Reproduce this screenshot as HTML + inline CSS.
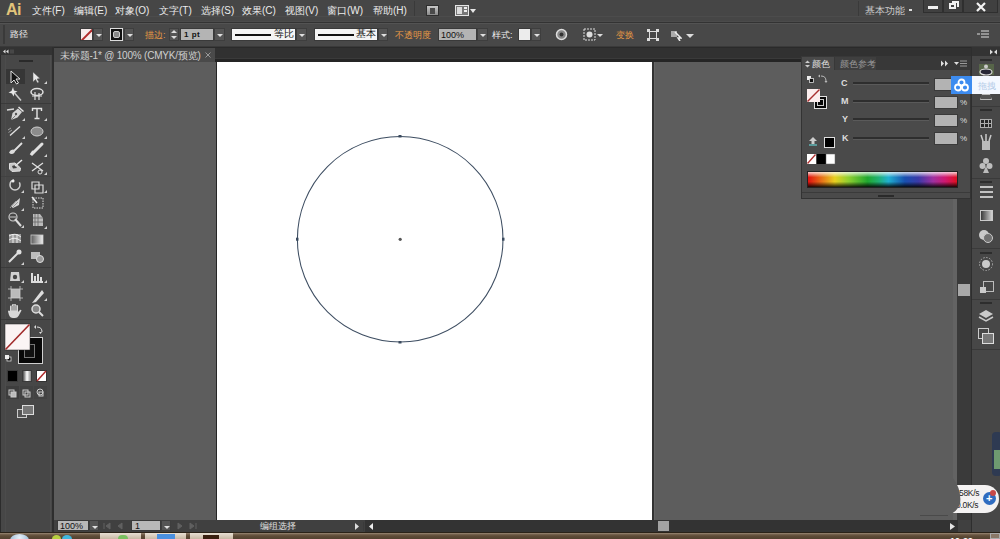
<!DOCTYPE html>
<html><head><meta charset="utf-8">
<style>
*{margin:0;padding:0;box-sizing:border-box}
html,body{width:1000px;height:539px;overflow:hidden;background:#5d5d5d;font-family:"Liberation Sans",sans-serif;font-size:11px;color:#ececec}
.a{position:absolute}
.t{position:absolute;white-space:nowrap;line-height:12px;font-size:10px}
#menubar{left:0;top:0;width:1000px;height:16px;background:#464646}
#sep{left:0;top:16px;width:1000px;height:6px;background:#464646;border-top:1px solid #4c4c4c;border-bottom:1px solid #4b4b4b}
#ctrl{left:0;top:22px;width:1000px;height:25px;background:#484848;border-top:1px solid #333;border-bottom:1px solid #3a3a3a}
#darkband{left:0;top:47px;width:1000px;height:15px;background:#313131;border-top:1px solid #2a2a2a}
#toolbar{left:0;top:47px;width:52px;height:485px;background:#474747}
#canvas{left:54px;top:62px;width:904px;height:458px;background:#5d5d5d}
#artboard{left:217px;top:62px;width:435px;height:458px;background:#fff}
#tab{left:54px;top:48px;width:161px;height:14px;background:#4a4a4a}
#status{left:54px;top:520px;width:918px;height:12px;background:#404040}
#taskbar{left:0;top:532px;width:1000px;height:7px;background:#5a4838}
#colorpanel{left:801px;top:56px;width:170px;height:143px;background:#4a4a4a;border:1px solid #333}
#dock{left:971px;top:47px;width:29px;height:485px;background:#474747}
#vscroll{left:957px;top:62px;width:14px;height:458px;background:#3a3a3a}
.dd{position:absolute;width:10px;height:13px;background:#555;border:1px solid #3e3e3e}
.dd:after{content:"";position:absolute;left:2px;top:5px;border-left:3px solid transparent;border-right:3px solid transparent;border-top:3px solid #e0e0e0}
.or{color:#e89a45}
.fld{position:absolute;background:#b4b4b4;color:#111;border:1px solid #3a3a3a}
</style></head><body>
<div id="menubar" class="a"></div>
<div id="sep" class="a"></div>
<div id="ctrl" class="a"></div>
<div id="darkband" class="a"></div>
<div class="a" style="left:0;top:23px;width:1000px;height:1px;background:#535353"></div>
<div id="canvas" class="a"></div>
<div id="artboard" class="a"></div>
<div id="tab" class="a"></div>
<div id="toolbar" class="a"></div>
<div id="status" class="a"></div>
<div id="taskbar" class="a"></div>
<div id="vscroll" class="a"></div>
<div id="dock" class="a"></div>
<div id="colorpanel" class="a"></div>


<!-- artboard edges -->
<div class="a" style="left:216px;top:62px;width:1px;height:458px;background:#262626"></div>
<div class="a" style="left:652px;top:62px;width:2px;height:458px;background:#323232"></div>
<div class="a" style="left:654px;top:62px;width:1px;height:458px;background:#666"></div>
<div class="a" style="left:215px;top:58px;width:743px;height:1px;background:#3a3a3a"></div>
<div class="a" style="left:215px;top:59px;width:743px;height:3px;background:#252525"></div>

<!-- menubar content -->
<div class="t" style="left:6px;top:2px;font-size:16px;font-weight:bold;color:#e2c47a;line-height:16px;letter-spacing:-0.5px">Ai</div>
<div class="t" style="left:32px;top:5px">文件(F)</div>
<div class="t" style="left:74px;top:5px">编辑(E)</div>
<div class="t" style="left:115px;top:5px">对象(O)</div>
<div class="t" style="left:159px;top:5px">文字(T)</div>
<div class="t" style="left:201px;top:5px">选择(S)</div>
<div class="t" style="left:242px;top:5px">效果(C)</div>
<div class="t" style="left:285px;top:5px">视图(V)</div>
<div class="t" style="left:327px;top:5px">窗口(W)</div>
<div class="t" style="left:373px;top:5px">帮助(H)</div>
<div class="t" style="left:865px;top:5px;color:#ccc">基本功能</div>


<!-- menubar icons -->
<div class="a" style="left:414px;top:1px;width:1px;height:15px;background:#3a3a3a"></div>
<div class="a" style="left:426px;top:5px;width:13px;height:11px;background:linear-gradient(#c8c8c8,#8a8a8a);border:1px solid #2e2e2e"></div>
<div class="a" style="left:430px;top:8px;width:5px;height:6px;background:#4a4a4a"></div>
<div class="a" style="left:455px;top:5px;width:14px;height:11px;border:1px solid #e6e6e6;background:#777"></div>
<div class="a" style="left:457px;top:7px;width:5px;height:7px;background:#ddd"></div>
<div class="a" style="left:464px;top:7px;width:3px;height:2px;background:#eee"></div>
<div class="a" style="left:464px;top:10px;width:3px;height:2px;background:#eee"></div>
<div class="a" style="left:470px;top:9px;border-left:3px solid transparent;border-right:3px solid transparent;border-top:4px solid #e6e6e6"></div>
<div class="a" style="left:858px;top:1px;width:1px;height:15px;background:#3a3a3a"></div>
<div class="a" style="left:909px;top:9px;width:3px;height:2px;background:#ddd"></div>
<!-- window buttons -->
<div class="a" style="left:923px;top:0;width:20px;height:13px;background:#404040;border:1px solid #2f2f2f;border-top:none"></div>
<div class="a" style="left:928px;top:6px;width:10px;height:3px;background:#f0f0f0"></div>
<div class="a" style="left:943px;top:0;width:20px;height:13px;background:#404040;border:1px solid #2f2f2f;border-top:none"></div>
<div class="a" style="left:949px;top:3px;width:7px;height:6px;border:2px solid #f0f0f0"></div>
<div class="a" style="left:952px;top:1px;width:7px;height:6px;border:2px solid #f0f0f0;border-left:none;border-bottom:none"></div>
<div class="a" style="left:963px;top:0;width:35px;height:13px;background:#404040;border:1px solid #2f2f2f;border-top:none"></div>
<svg class="a" style="left:975px;top:2px" width="12" height="10"><path d="M2 1 L10 9 M10 1 L2 9" stroke="#f4f4f4" stroke-width="2.2"/></svg>

<!-- control bar -->
<div class="a" style="left:3px;top:25px;width:2px;height:19px;background:#3a3a3a"></div>
<div class="t" style="left:10px;top:28px;font-size:9px">路径</div>
<div class="a" style="left:80px;top:28px;width:13px;height:13px;background:#f6ecec;border:1px solid #3a3a3a;overflow:hidden"><div style="position:absolute;left:-3px;top:5px;width:18px;height:1.5px;background:#b02a2a;transform:rotate(-45deg)"></div></div>
<div class="dd" style="left:93px;top:28px"></div>
<div class="a" style="left:110px;top:28px;width:13px;height:13px;background:#111;border:1px solid #ddd"></div>
<div class="a" style="left:113px;top:31px;width:7px;height:7px;border:1px solid #ccc;border-radius:2px;background:#888"></div>
<div class="dd" style="left:124px;top:28px"></div>
<div class="t or" style="left:145px;top:29px;font-size:9px">描边:</div>
<div class="a" style="left:169px;top:28px;width:10px;height:13px;background:#555;border:1px solid #3e3e3e"></div>
<div class="a" style="left:171px;top:30px;border-left:3px solid transparent;border-right:3px solid transparent;border-bottom:3px solid #ddd"></div>
<div class="a" style="left:171px;top:36px;border-left:3px solid transparent;border-right:3px solid transparent;border-top:3px solid #ddd"></div>
<div class="fld t" style="left:180px;top:28px;width:34px;height:13px;padding-left:3px;font-weight:bold;font-size:8px;letter-spacing:0.5px">1 pt</div>
<div class="dd" style="left:214px;top:28px;width:11px"></div>
<div class="a" style="left:231px;top:28px;width:65px;height:13px;background:#f4f4f4;border:1px solid #3a3a3a"></div>
<div class="a" style="left:235px;top:34px;width:36px;height:2px;background:#111"></div>
<div class="t" style="left:274px;top:28px;color:#111;font-size:10px">等比</div>
<div class="dd" style="left:296px;top:28px;width:11px"></div>
<div class="a" style="left:314px;top:28px;width:64px;height:13px;background:#f4f4f4;border:1px solid #3a3a3a"></div>
<div class="a" style="left:318px;top:34px;width:36px;height:2px;background:#111"></div>
<div class="t" style="left:356px;top:28px;color:#111;font-size:10px">基本</div>
<div class="dd" style="left:378px;top:28px;width:10px"></div>
<div class="t or" style="left:395px;top:29px;font-size:9px">不透明度</div>
<div class="fld t" style="left:438px;top:28px;width:39px;height:13px;padding-left:2px;font-size:9px">100%</div>
<div class="dd" style="left:477px;top:28px;width:11px"></div>
<div class="t" style="left:492px;top:29px;font-size:9px">样式:</div>
<div class="a" style="left:518px;top:28px;width:13px;height:13px;background:#ececec;border:1px solid #3a3a3a"></div>
<div class="dd" style="left:531px;top:28px"></div>
<svg class="a" style="left:555px;top:28px" width="13" height="13"><circle cx="6.5" cy="6.5" r="5" fill="#888" stroke="#ddd" stroke-width="1.5"/><circle cx="6.5" cy="6.5" r="2" fill="#333"/></svg>
<svg class="a" style="left:583px;top:28px" width="13" height="13"><rect x="1" y="1" width="11" height="11" fill="none" stroke="#ddd" stroke-dasharray="2 1"/><circle cx="6.5" cy="6.5" r="3" fill="#ddd"/></svg>
<div class="a" style="left:597px;top:34px;border-left:3px solid transparent;border-right:3px solid transparent;border-top:3px solid #ddd"></div>
<div class="t or" style="left:616px;top:29px;font-size:9px">变换</div>
<svg class="a" style="left:647px;top:29px" width="12" height="12"><rect x="2.5" y="2.5" width="7" height="7" fill="none" stroke="#ddd"/><path d="M0 0h3v3h-3zM9 0h3v3h-3zM0 9h3v3h-3zM9 9h3v3h-3z" fill="#ddd"/></svg>
<svg class="a" style="left:670px;top:28px" width="12" height="13"><path d="M1 3h6v6h-6z" fill="#aaa"/><path d="M5 4 L11 10 L8 10 L10 13" stroke="#eee" stroke-width="1.5" fill="none"/></svg>
<div class="a" style="left:686px;top:34px;border-left:4px solid transparent;border-right:4px solid transparent;border-top:4px solid #ddd"></div>
<svg class="a" style="left:977px;top:29px" width="12" height="11"><path d="M4 2h8M4 5h8M4 8h8M0 5h3" stroke="#ddd" stroke-width="1"/></svg>


<!-- tab -->
<div class="t" id="tabtxt" style="left:60px;top:50px;color:#cfcfcf;font-size:10px;letter-spacing:-0.2px">未标题-1* @ 100% (CMYK/预览)</div>
<svg class="a" style="left:205px;top:52px" width="6" height="6"><path d="M0.5 0.5L5.5 5.5M5.5 0.5L0.5 5.5" stroke="#999" stroke-width="1"/></svg>


<!-- toolbar -->
<div class="a" style="left:0;top:47px;width:52px;height:8px;background:#333"></div>
<div class="a" style="left:52px;top:47px;width:2px;height:485px;background:#2e2e2e"></div>
<div class="a" style="left:0;top:55px;width:1px;height:477px;background:#2c2c2c"></div>
<div class="a" style="left:5px;top:55px;width:1px;height:477px;background:#4c4c4c"></div>
<div class="a" style="left:50px;top:55px;width:1px;height:477px;background:#4e4e4e"></div>
<svg class="a" style="left:0;top:47px" width="52" height="485">
<g fill="#ddd"><path d="M3 4.5L5.5 2.5v4zM6 4.5L8.5 2.5v4z"/></g>
<rect x="10.5" y="2.5" width="1" height="4" fill="#5c5c5c"/><rect x="12.5" y="2.5" width="1" height="4" fill="#5c5c5c"/>
<rect x="19" y="13" width="14" height="2" fill="#2a2a2a"/>
<g transform="translate(0,-47)">
<!-- active tool bg -->
<rect x="6" y="69" width="19" height="15" fill="#363636"/>
<!-- selection black arrow -->
<path d="M11 71 L11 83 L14 80 L16.5 84 L18.5 83 L16 79 L20 79 Z" fill="#111" stroke="#e0e0e0" stroke-width="1"/>
<!-- direct selection -->
<path d="M33 72 L33 82 L35.5 79.5 L37.5 83 L39 82 L37 79 L40 78.5 Z" fill="#e8e8e8" stroke="#555" stroke-width="0.5"/>
<path d="M47 81 L47 84 L44 84 Z" fill="#d0d0d0"/>
<!-- magic wand -->
<path d="M13 87 L14 90.5 L17.5 91.5 L14.5 93 L13.5 96.5 L12 93.5 L8.5 92.5 L11.5 91 Z" fill="#e8e8e8"/>
<path d="M14.5 93 L21 100.5" stroke="#ccc" stroke-width="1.5"/>
<!-- lasso -->
<ellipse cx="37" cy="92" rx="6" ry="3.5" fill="none" stroke="#e0e0e0" stroke-width="1.5"/>
<path d="M35 92 L35 100 M39 93 L39 100 M32 96 L42 96" stroke="#e0e0e0" stroke-width="1.2"/>
<rect x="1" y="103" width="50" height="1" fill="#3a3a3a"/>
<!-- pen -->
<path d="M7 110 L14 109" stroke="#d8d8d8" stroke-width="1.5"/><path d="M11 120 L12.5 113 L18 108.5 L22 112 L17.5 117.5 Z" fill="#d4d4d4"/><path d="M18.5 107 L23.5 111.5" stroke="#e8e8e8" stroke-width="1.5"/><circle cx="16" cy="114" r="1.2" fill="#555"/><path d="M11 120 L15.5 115.5" stroke="#666" stroke-width="0.8"/>
<path d="M25 118 L25 121 L22 121 Z" fill="#d0d0d0"/>
<!-- Type -->
<path d="M32.5 111 V108.5 H41.5 V111 M37 108.5 V118.5 M34.5 118.5 H39.5" stroke="#e4e4e4" stroke-width="1.4" fill="none"/>
<path d="M47 118 L47 121 L44 121 Z" fill="#d0d0d0"/>
<!-- line -->
<path d="M10 135.5 L20 126.5" stroke="#e0e0e0" stroke-width="1.4"/><path d="M8 130 L11 128 M8.5 132.5 L12 130" stroke="#aaa" stroke-width="0.9"/>
<path d="M25 136 L25 139 L22 139 Z" fill="#d0d0d0"/>
<!-- ellipse -->
<ellipse cx="37" cy="131.5" rx="6" ry="4.5" fill="#8c8c8c" stroke="#cfcfcf" stroke-width="1"/>
<path d="M47 136 L47 139 L44 139 Z" fill="#d0d0d0"/>
<!-- brush -->
<path d="M22 143 L14.5 150.5" stroke="#e0e0e0" stroke-width="1.8"/><path d="M9 152.5 Q11 148.5 15 150 Q15.5 153 12 154 Q10 154 9 152.5Z" fill="#dcdcdc"/>
<!-- pencil -->
<path d="M42 144 L33 153 L31 155 L33 152" stroke="#e0e0e0" stroke-width="3" stroke-linecap="round"/>
<path d="M47 154 L47 157 L44 157 Z" fill="#d0d0d0"/>
<!-- blob brush -->
<path d="M9.5 163.5 L15 163 L20.5 168 L20 171 L12 171.5 L9.5 169 Z" fill="#c8c8c8" stroke="#e0e0e0"/><path d="M12 166 L15 165 L17 168 L13 168.5 Z" fill="#444"/><path d="M15 166 L22 160" stroke="#e8e8e8" stroke-width="1.6"/>
<!-- scissors -->
<path d="M32 163 L43 171 M32 171 L43 163" stroke="#e0e0e0" stroke-width="1.3"/><circle cx="40" cy="172" r="2" fill="none" stroke="#ddd"/>
<path d="M47 172 L47 175 L44 175 Z" fill="#d0d0d0"/>
<rect x="1" y="176" width="50" height="1" fill="#414141"/>
<!-- rotate -->
<circle cx="15" cy="185" r="5" fill="none" stroke="#cfcfcf" stroke-width="1.5" stroke-dasharray="22 6"/><circle cx="13" cy="181" r="1.5" fill="#eee"/>
<path d="M24 190 L24 193 L21 193 Z" fill="#d0d0d0"/>
<!-- scale -->
<path d="M32 182 h7 v7 h-7z M35 185 h8 v8 h-8z" fill="none" stroke="#dcdcdc" stroke-width="1.2"/>
<path d="M47 190 L47 193 L44 193 Z" fill="#d0d0d0"/>
<!-- warp -->
<path d="M11 206 L20 198 L19 205 L13 208 Z" fill="#d8d8d8"/><path d="M10 208 L16 201 M12 208 L18 202" stroke="#999"/>
<path d="M24 208 L24 211 L21 211 Z" fill="#d0d0d0"/>
<!-- free transform -->
<rect x="33" y="198" width="10" height="10" fill="none" stroke="#ddd" stroke-dasharray="1.5 1"/><path d="M32 197 L37 203" stroke="#eee" stroke-width="1.5"/>
<!-- shape builder -->
<circle cx="13" cy="217" r="4" fill="none" stroke="#ccc" stroke-width="1.2"/><path d="M10 217 h6" stroke="#ccc"/><path d="M15 219 L21 226" stroke="#ddd" stroke-width="2"/>
<path d="M24 225 L24 228 L21 228 Z" fill="#d0d0d0"/>
<!-- perspective grid -->
<path d="M33 214 h7 l3 4 v8 h-10z" fill="#bcbcbc"/><path d="M35 214 v12 M38 214 v12 M33 218 h10 M33 222 h10" stroke="#666" stroke-width="0.8"/>
<path d="M47 226 L47 229 L44 229 Z" fill="#d0d0d0"/>
<!-- mesh -->
<rect x="9" y="234" width="12" height="9" fill="#999"/><path d="M9 236 Q15 232 21 237 M9 240 Q15 236 21 241 M13 234 v9 M17 234 v9" stroke="#eee" stroke-width="1" fill="none"/>
<!-- gradient -->
<defs><linearGradient id="tg" x1="0" x2="1" y1="0" y2="0"><stop offset="0" stop-color="#5a5a5a"/><stop offset="1" stop-color="#eeeeee"/></linearGradient></defs>
<rect x="31" y="235" width="12" height="9" fill="url(#tg)" stroke="#ccc" stroke-width="0.8"/>
<!-- eyedropper -->
<path d="M9 262 L18 253" stroke="#ddd" stroke-width="2"/><circle cx="19" cy="252" r="2.5" fill="#e0e0e0"/>
<path d="M24 262 L24 265 L21 265 Z" fill="#d0d0d0"/>
<!-- blend -->
<rect x="31" y="252" width="9" height="7" fill="#bbb"/><circle cx="40" cy="259" r="3.5" fill="#999" stroke="#ddd"/>
<rect x="1" y="267" width="50" height="1" fill="#3a3a3a"/>
<!-- symbol sprayer -->
<path d="M11 272 h8 l1 9 h-10z" fill="#d0d0d0"/><circle cx="15" cy="277" r="2.2" fill="#444"/>
<path d="M24 280 L24 283 L21 283 Z" fill="#d0d0d0"/>
<!-- graph -->
<path d="M31 282 h12 M32 281 v-8 M35 281 v-5 M38 281 v-7 M41 281 v-4" stroke="#ddd" stroke-width="2"/>
<path d="M47 280 L47 283 L44 283 Z" fill="#d0d0d0"/>
<!-- artboard -->
<rect x="11" y="289" width="9" height="9" fill="#bbb"/><path d="M8 289 h15 M8 298 h15 M11 286 v15 M20 286 v15" stroke="#ccc" stroke-width="0.8"/>
<!-- slice -->
<path d="M32 303 L42 290 L44 293 L36 302 Z" fill="#ddd"/>
<path d="M47 298 L47 301 L44 301 Z" fill="#d0d0d0"/>
<!-- hand -->
<path d="M10 311 V306.5 Q10 305.5 11 305.5 Q12 305.5 12 306.5 V310 V305 Q12 304 13 304 Q14 304 14 305 V310 V305 Q14 304 15 304 Q16 304 16 305 V310 V306 Q16 305 17 305 Q18 305 18 306 V312 L20 310 Q21 309.5 21.5 310.5 L18.5 316 Q17.5 318 15 318 H13 Q10 318 9 315 L8 311.5 Q8 310.5 9 310.5 Z" fill="#d8d8d8"/>
<path d="M12 306 V310.5 M14 305 V310.5 M16 305.5 V310.5" stroke="#474747" stroke-width="0.7"/>
<!-- zoom -->
<circle cx="36" cy="309" r="4" fill="#888" stroke="#ddd" stroke-width="1.5"/><path d="M39 312 L43 316" stroke="#ddd" stroke-width="2"/>
<rect x="1" y="319" width="50" height="1" fill="#3a3a3a"/>
<!-- stroke swatch -->
<rect x="18.5" y="337.5" width="24" height="26" fill="#080808" stroke="#cfcfcf"/>
<rect x="24.5" y="344.5" width="10" height="13" fill="#111" stroke="#777"/>
<!-- fill swatch -->
<rect x="5" y="324" width="25" height="26" fill="#fbf4f4" stroke="#222" stroke-width="0.5"/>
<path d="M5.5 349.5 L29.5 324.5" stroke="#a12a2a" stroke-width="1.6"/>
<!-- swap -->
<path d="M37 327 q5 0 5 5" fill="none" stroke="#ddd"/><path d="M36 325 v4 l-2 -2z M42 332 h-3 l1.5 2z" fill="#ddd"/>
<!-- default -->
<rect x="7" y="357" width="4" height="4" fill="#111" stroke="#ddd" stroke-width="0.8"/><rect x="5" y="355" width="4" height="4" fill="#eee"/>
<!-- color modes -->
<rect x="7.5" y="370.5" width="10" height="11" fill="#000" stroke="#3a3a3a"/>
<rect x="22.5" y="370.5" width="9" height="11" fill="url(#tg2)" stroke="#3a3a3a"/>
<defs><linearGradient id="tg2"><stop offset="0" stop-color="#333"/><stop offset="0.5" stop-color="#fff"/><stop offset="1" stop-color="#777"/></linearGradient></defs>
<rect x="36.5" y="370.5" width="10" height="11" fill="#fff" stroke="#333"/><path d="M37 381 L46 371" stroke="#b02a2a" stroke-width="1.5"/>
<!-- draw modes -->
<rect x="6" y="386" width="13" height="13" fill="#3d3d3d"/><rect x="20" y="386" width="13" height="13" fill="#424242"/><rect x="34" y="386" width="13" height="13" fill="#424242"/>
<g fill="none" stroke="#ccc" stroke-width="1"><rect x="9" y="390" width="5" height="5"/><rect x="11" y="392" width="5" height="5" fill="#bbb"/>
<rect x="23" y="390" width="5" height="5"/><rect x="25" y="392" width="5" height="5"/>
<circle cx="40" cy="392" r="3"/><rect x="39" y="392" width="4" height="4"/></g>
<!-- screen mode -->
<rect x="17.5" y="409.5" width="9" height="8" fill="#555" stroke="#ccc"/>
<rect x="22.5" y="405.5" width="11" height="9" fill="#777" stroke="#ddd"/>
</g>
</svg>


<!-- color panel -->
<div class="a" style="left:801px;top:56px;width:170px;height:14px;background:#383838"></div>
<div class="a" style="left:802px;top:57px;width:32px;height:13px;background:#4a4a4a"></div>
<div class="a" style="left:835px;top:57px;width:41px;height:13px;background:#3f3f3f"></div>
<svg class="a" style="left:805px;top:60px" width="5" height="8"><path d="M0 3L2.5 0.5L5 3ZM0 5L2.5 7.5L5 5Z" fill="#ccc"/></svg>
<div class="t" style="left:812px;top:58px;color:#e0e0e0;font-size:9px">颜色</div>
<div class="t" style="left:840px;top:58px;color:#9a9a9a;font-size:9px">颜色参考</div>
<svg class="a" style="left:940px;top:60px" width="30" height="8"><path d="M1 0.5L4 3.5L1 6.5ZM5 0.5L8 3.5L5 6.5Z" fill="#e0e0e0"/><path d="M14 2h5l-2.5 3z" fill="#ddd"/><path d="M20 1h7M20 3.5h7M20 6h7" stroke="#999" stroke-width="1"/></svg>
<!-- default & swap icons -->
<svg class="a" style="left:805px;top:74px" width="24" height="36">
<rect x="2" y="2" width="4" height="4" fill="#eee"/><rect x="4.5" y="4.5" width="4" height="4" fill="#111" stroke="#ddd" stroke-width="0.8"/>
<path d="M16 2 q5 0 5 5" fill="none" stroke="#bbb"/><path d="M15 0.5v3l-2-1.5z M19.5 7h3l-1.5 2z" fill="#bbb"/>
<rect x="9.5" y="22.5" width="12" height="12" fill="#070707" stroke="#e0e0e0"/>
<rect x="12.5" y="25.5" width="6" height="6" fill="none" stroke="#ccc"/>
<rect x="2" y="15" width="13" height="13" fill="#fbeeee"/>
<path d="M2.5 27.5 L14.5 15.5" stroke="#a83030" stroke-width="1.5"/>
</svg>
<div class="t" style="left:841px;top:77px;color:#ddd;font-size:9px;font-weight:bold">C</div>
<div class="t" style="left:841px;top:95px;color:#ddd;font-size:9px;font-weight:bold">M</div>
<div class="t" style="left:842px;top:113px;color:#ddd;font-size:9px;font-weight:bold">Y</div>
<div class="t" style="left:842px;top:132px;color:#ddd;font-size:9px;font-weight:bold">K</div>
<div class="a" style="left:853px;top:82px;width:76px;height:3px;background:#2e2e2e;border-bottom:1px solid #5a5a5a"></div>
<div class="a" style="left:853px;top:100px;width:76px;height:3px;background:#2e2e2e;border-bottom:1px solid #5a5a5a"></div>
<div class="a" style="left:853px;top:118px;width:76px;height:3px;background:#2e2e2e;border-bottom:1px solid #5a5a5a"></div>
<div class="a" style="left:853px;top:137px;width:76px;height:3px;background:#2e2e2e;border-bottom:1px solid #5a5a5a"></div>
<div class="a" style="left:934px;top:78px;width:24px;height:13px;background:#b3b3b3;border:1px solid #3a3a3a"></div>
<div class="a" style="left:934px;top:96px;width:24px;height:13px;background:#b3b3b3;border:1px solid #3a3a3a"></div>
<div class="a" style="left:934px;top:114px;width:24px;height:13px;background:#b3b3b3;border:1px solid #3a3a3a"></div>
<div class="a" style="left:934px;top:132px;width:24px;height:13px;background:#b3b3b3;border:1px solid #3a3a3a"></div>
<div class="t" style="left:960px;top:97px;color:#ddd;font-size:8px">%</div>
<div class="t" style="left:960px;top:115px;color:#ddd;font-size:8px">%</div>
<div class="t" style="left:960px;top:133px;color:#ddd;font-size:8px">%</div>
<svg class="a" style="left:806px;top:136px" width="32" height="30">
<path d="M7 1 L11 5 H8.5 V10 H5.5 V5 H3 Z" fill="#ccc"/><rect x="3" y="8" width="8" height="2" fill="#5a9a9a"/>
<rect x="18.5" y="1.5" width="10" height="10" fill="#000" stroke="#ddd"/>
<rect x="1" y="18" width="9" height="10" fill="#fff"/><path d="M1.5 27.5 L9.5 18.5" stroke="#b03030" stroke-width="1.3"/>
<rect x="11" y="18" width="9" height="10" fill="#000"/>
<rect x="20" y="18" width="9" height="10" fill="#fff" stroke="#666" stroke-width="0.5"/>
</svg>
<div class="a" style="left:807px;top:171px;width:151px;height:17px;border:1px solid #222;background:linear-gradient(to right,#e01010 0%,#e87018 9%,#e8d020 18%,#90d030 27%,#20a830 40%,#20b070 47%,#20b0d0 54%,#1850b0 65%,#3a3aa8 74%,#a030a0 84%,#d01870 92%,#e01020 100%)"></div>
<div class="a" style="left:808px;top:172px;width:149px;height:15px;background:linear-gradient(to bottom,rgba(255,255,255,0.8) 0%,rgba(255,255,255,0) 35%,rgba(0,0,0,0) 65%,rgba(0,0,0,0.85) 100%)"></div>
<div class="a" style="left:802px;top:192px;width:168px;height:1px;background:#3a3a3a"></div>
<div class="a" style="left:878px;top:195px;width:16px;height:2px;background:#2a2a2a"></div>


<!-- vertical scrollbar & dock -->
<div class="a" style="left:953px;top:199px;width:4px;height:321px;background:#636363"></div>
<div class="a" style="left:958px;top:284px;width:12px;height:12px;background:#a8a8a8"></div>
<div class="a" style="left:971px;top:47px;width:1px;height:485px;background:#2e2e2e"></div>
<div class="a" style="left:972px;top:47px;width:28px;height:9px;background:#333"></div>
<svg class="a" style="left:990px;top:49px" width="8" height="6"><path d="M0 0.5L3 3L0 5.5ZM7 0.5L4 3L7 5.5Z" fill="#ddd"/></svg>
<svg class="a" style="left:972px;top:56px;opacity:0.88" width="28" height="300">
<g fill="#2a2a2a"><rect x="8" y="3" width="12" height="2"/><rect x="8" y="53" width="12" height="2"/><rect x="8" y="125" width="12" height="2"/><rect x="8" y="196" width="12" height="2"/><rect x="8" y="246" width="12" height="2"/></g>
<g fill="#393939"><rect x="0" y="50" width="28" height="1"/><rect x="0" y="122" width="28" height="1"/><rect x="0" y="192" width="28" height="1"/><rect x="0" y="243" width="28" height="1"/></g>
<g transform="translate(0,-56)">
<!-- icon1 cc -->
<rect x="979" y="64" width="15" height="11" fill="#5a6a4a" transform="translate(-972,0)"/>
<ellipse cx="14" cy="72" rx="6" ry="3" fill="#223" stroke="#eee" stroke-width="1.2"/>
<circle cx="14" cy="66.5" r="2" fill="#ddd"/>
<!-- icon2 -->
<path d="M8 100 h12 l-2 -6 h-8z" fill="#ccc"/><rect x="9" y="95" width="10" height="4" fill="#555"/>
<!-- swatches -->
<rect x="8" y="119" width="12" height="9" fill="#bbb"/><g fill="#222"><rect x="9" y="120" width="3" height="3"/><rect x="13" y="120" width="3" height="3"/><rect x="17" y="120" width="2" height="3"/><rect x="9" y="124" width="3" height="3"/><rect x="13" y="124" width="3" height="3"/><rect x="17" y="124" width="2" height="3"/></g>
<!-- brushes -->
<rect x="10" y="141" width="8" height="9" fill="#ccc"/><path d="M11 141 l-2 -6 M14 141 v-7 M17 141 l2 -6" stroke="#ddd" stroke-width="1.5"/>
<!-- symbols (club) -->
<circle cx="14" cy="161" r="3" fill="#d0d0d0"/><circle cx="10.5" cy="166" r="3" fill="#d0d0d0"/><circle cx="17.5" cy="166" r="3" fill="#d0d0d0"/><path d="M14 166 l-3 7 h6z" fill="#ccc"/>
<!-- stroke lines -->
<g fill="#d4d4d4"><rect x="8" y="186" width="13" height="2"/><rect x="8" y="191" width="13" height="2"/><rect x="8" y="196" width="13" height="2"/></g>
<!-- gradient -->
<defs><linearGradient id="dg"><stop offset="0" stop-color="#333"/><stop offset="1" stop-color="#eee"/></linearGradient></defs>
<rect x="8.5" y="210.5" width="12" height="10" fill="url(#dg)" stroke="#ddd"/>
<!-- transparency -->
<circle cx="12" cy="235" r="5" fill="#ddd"/><circle cx="16" cy="238" r="4.5" fill="#777" stroke="#ddd"/>
<!-- appearance -->
<circle cx="14" cy="264" r="6.5" fill="none" stroke="#bbb" stroke-dasharray="1.5 1.5"/><circle cx="14" cy="264" r="4" fill="#ddd"/>
<!-- graphic styles -->
<rect x="11.5" y="281.5" width="10" height="10" fill="none" stroke="#ccc"/><rect x="8" y="287" width="6" height="6" fill="#ddd"/>
<!-- layers -->
<path d="M14 310 L21 314 L14 318 L7 314Z" fill="#ddd"/><path d="M7 317 L14 321 L21 317" fill="none" stroke="#ddd" stroke-width="1.5"/>
</g>
</svg>
<svg class="a" style="left:972px;top:326px" width="28" height="20"><rect x="6.5" y="2.5" width="10" height="10" fill="none" stroke="#ccc"/><rect x="10.5" y="7.5" width="11" height="10" fill="#777" stroke="#ddd"/></svg>
<div class="a" style="left:992px;top:432px;width:10px;height:44px;background:#2e3a52;border-radius:4px"></div>
<div class="a" style="left:994px;top:450px;width:6px;height:19px;background:#6e9a70"></div>
<div class="a" style="left:972px;top:349px;width:28px;height:1px;background:#393939"></div>

<!-- status bar -->
<div class="a" style="left:365px;top:520px;width:593px;height:12px;background:#333"></div>
<div class="fld t" style="left:57px;top:520px;width:32px;height:11px;font-size:9px;line-height:10px;padding-left:2px;background:#b8b8b8">100%</div>
<div class="dd" style="left:89px;top:520px;width:10px;height:11px"></div>
<svg class="a" style="left:100px;top:521px" width="30" height="10"><path d="M4 2v6M10 2L6 5L10 8ZM22 2L18 5L22 8Z" stroke="#606060" fill="#606060"/></svg>
<div class="fld t" style="left:131px;top:520px;width:30px;height:11px;font-size:9px;line-height:10px;padding-left:3px;background:#b8b8b8">1</div>
<div class="dd" style="left:161px;top:520px;width:10px;height:11px"></div>
<svg class="a" style="left:172px;top:521px" width="34" height="10"><path d="M6 2L10 5L6 8ZM18 2L22 5L18 8ZM24 2v6" stroke="#606060" fill="#606060"/></svg>
<div class="t" style="left:260px;top:520px;color:#e0e0e0;font-size:9px">编组选择</div>
<svg class="a" style="left:353px;top:522px" width="22" height="9"><path d="M2 1L6 4.5L2 8Z" fill="#ddd"/><path d="M20 1L16 4.5L20 8Z" fill="#eee"/><rect x="10" y="0" width="1" height="9" fill="#3a3a3a"/></svg>
<div class="a" style="left:658px;top:521px;width:11px;height:10px;background:#a3a3a3"></div>
<svg class="a" style="left:948px;top:522px" width="9" height="9"><path d="M2 1L7 4.5L2 8Z" fill="#e6e6e6"/></svg>

<!-- net widget -->
<div class="a" style="left:948px;top:485px;width:51px;height:28px;background:#f4f2f2;border-radius:0 14px 14px 0"></div>
<div class="t" style="left:959px;top:488px;color:#222;font-size:8.5px;line-height:10px;letter-spacing:-0.3px">58K/s</div>
<div class="t" style="left:956px;top:500px;color:#222;font-size:8.5px;line-height:10px;letter-spacing:-0.3px">0.0K/s</div>
<div class="a" style="left:983px;top:492px;width:13px;height:13px;border-radius:50%;background:#2f6cc0"></div>
<div class="t" style="left:986px;top:491px;color:#fff;font-size:11px;font-weight:bold;line-height:14px">+</div>
<div class="a" style="left:990px;top:490px;width:6px;height:6px;border-radius:50%;background:#c84848"></div>
<svg class="a" style="left:900px;top:470px" width="62" height="50"><path d="M0 14 H53 V8 Q62 20 60 34 Q56 44 46 45 H0 Z" fill="#5d5d5d"/><path d="M20 45.5 H48" stroke="#4a4a4a" stroke-width="1"/></svg>

<!-- taskbar -->
<div class="a" style="left:0;top:532px;width:1000px;height:7px;background:linear-gradient(#2a2218 0px,#2a2218 1px,#a08f7c 1px,#7a6752 2px,#5e4b37 4px,#534230 7px)"></div>
<div class="a" style="left:10px;top:534px;width:19px;height:12px;border-radius:50%;background:radial-gradient(circle at 50% 30%,#e8f0f8,#8ab0d0)"></div>
<div class="a" style="left:52px;top:535px;width:9px;height:8px;border-radius:50%;background:#b8d040"></div>
<div class="a" style="left:62px;top:535px;width:10px;height:8px;border-radius:50%;background:#40b8e0"></div>
<div class="a" style="left:100px;top:533px;width:41px;height:6px;background:linear-gradient(#e8e0d4,#c8b8a4)"></div>
<div class="a" style="left:145px;top:533px;width:41px;height:6px;background:linear-gradient(#e8e0d4,#c8b8a4)"></div>
<div class="a" style="left:190px;top:533px;width:43px;height:6px;background:linear-gradient(#e8e0d4,#c8b8a4)"></div>
<div class="a" style="left:118px;top:535px;width:10px;height:4px;background:#7ac060;border-radius:4px 4px 0 0"></div>
<div class="a" style="left:157px;top:534px;width:18px;height:5px;background:#4a90e0"></div>
<div class="a" style="left:203px;top:535px;width:16px;height:4px;background:#3a2010"></div>
<div class="t" style="left:950px;top:535px;color:#fff;font-size:9px;font-weight:bold">10:29</div>
<div class="a" style="left:990px;top:533px;width:10px;height:6px;background:#8a7868;border:1px solid #aaa"></div>

<!-- baidu overlay -->
<div class="a" style="left:951px;top:76px;width:49px;height:18px;background:#f4f8ff"></div>
<div class="a" style="left:951px;top:76px;width:21px;height:18px;background:#3d8cf0"></div>
<svg class="a" style="left:953px;top:77px" width="17" height="16"><g fill="none" stroke="#fff" stroke-width="1.8"><circle cx="8.5" cy="5.5" r="3"/><circle cx="5" cy="10.5" r="3"/><circle cx="12" cy="10.5" r="3"/></g></svg>
<div class="t" style="left:978px;top:80px;color:#b4cce8;font-size:9px">拖拽</div>

<svg class="a" style="left:0;top:0" width="1000" height="539">
<circle cx="400.2" cy="239.2" r="102.8" fill="none" stroke="#3e4e62" stroke-width="1.05"/>
<g fill="#3a4a5e"><rect x="398.5" y="135" width="3" height="2.5"/><rect x="398.5" y="341" width="3" height="2.5"/><rect x="296" y="237.7" width="2.5" height="3"/><rect x="502" y="237.7" width="2.5" height="3"/></g>
<circle cx="400.2" cy="239.3" r="1.6" fill="#555"/>
</svg>
</body></html>
